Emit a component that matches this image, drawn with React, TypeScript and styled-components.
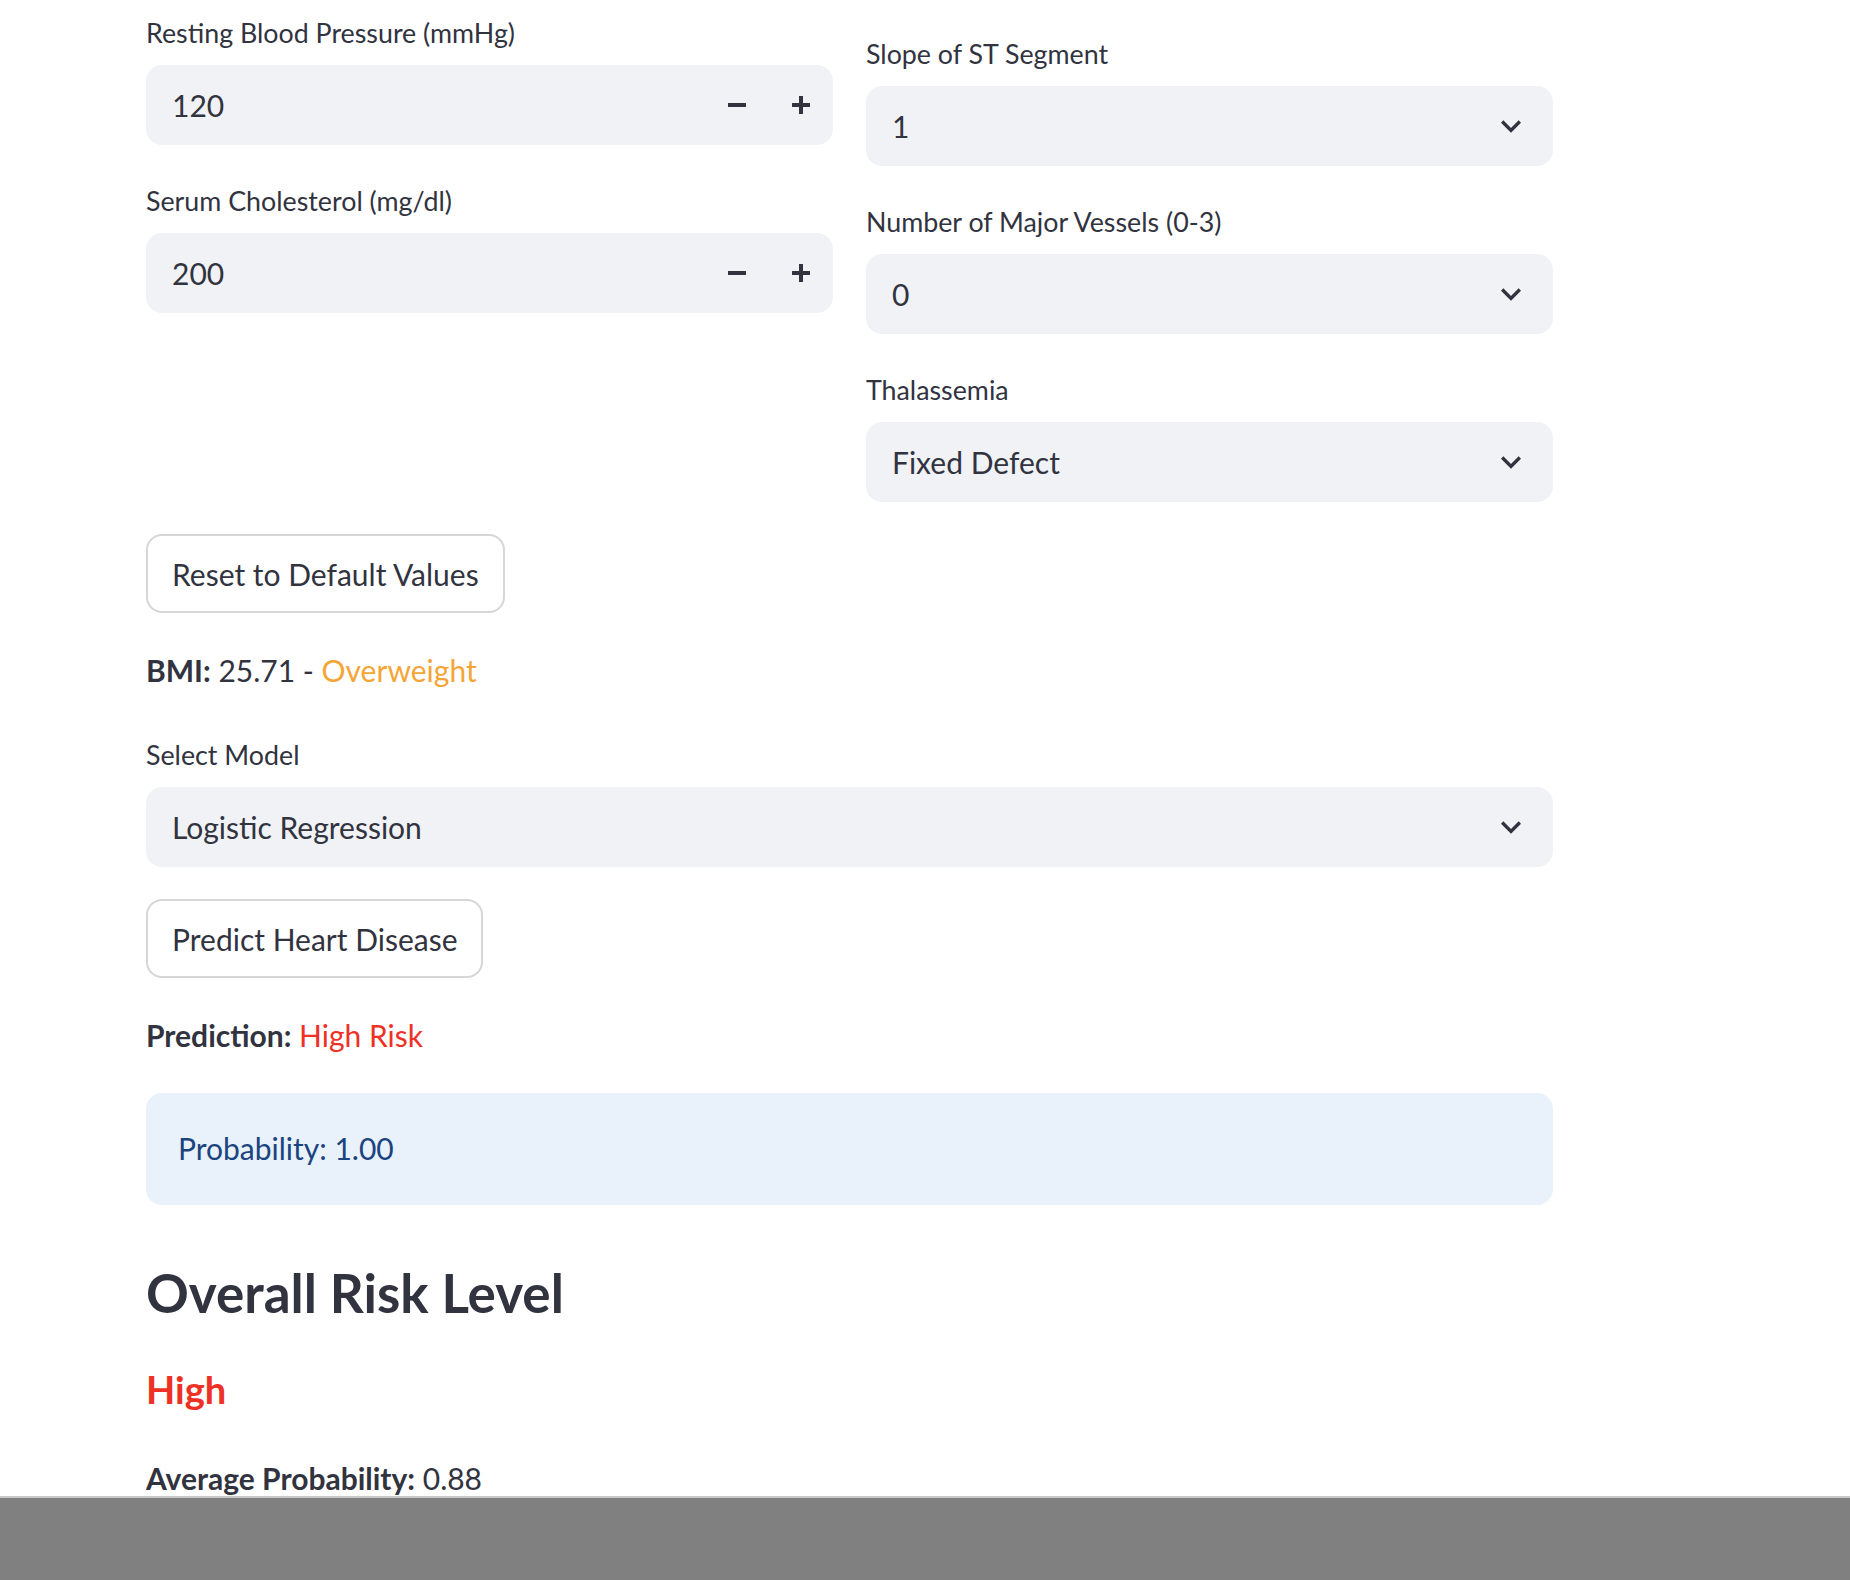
import React from "react";
import styled, { createGlobalStyle } from "styled-components";

const GlobalStyle = createGlobalStyle`
  html, body {
    margin: 0;
    padding: 0;
    background: #ffffff;
  }
  body {
    font-family: "Source Sans Pro", "Lato", "Liberation Sans", sans-serif;
    color: #31333f;
    -webkit-font-smoothing: antialiased;
  }
  * { box-sizing: border-box; }
`;

const Main = styled.main`
  width: 1407px;
  margin-left: 146px;
  padding-top: 9px;
  display: flex;
  flex-direction: column;
  gap: 32px;
`;

const Columns = styled.div`
  display: grid;
  grid-template-columns: 1fr 1fr;
  column-gap: 33px;
`;

const Column = styled.div<{ $offset?: number }>`
  display: flex;
  flex-direction: column;
  gap: 32px;
  padding-top: ${(p) => p.$offset ?? 0}px;
`;

const Field = styled.div`
  display: flex;
  flex-direction: column;
`;

const Label = styled.label`
  display: flex;
  align-items: center;
  height: 48px;
  margin-bottom: 8px;
  font-size: 26.8px;
  line-height: 44px;
  color: #31333f;
`;

const InputBox = styled.div`
  display: flex;
  align-items: center;
  height: 80px;
  background: #f0f2f6;
  border-radius: 16px;
  padding-left: 26px;
`;

const Value = styled.span`
  flex: 1;
  font-size: 30px;
  line-height: 44px;
  color: #31333f;
`;

const StepButton = styled.button`
  width: 64px;
  height: 80px;
  border: none;
  background: transparent;
  padding: 0;
  display: flex;
  align-items: center;
  justify-content: center;
  color: #31333f;
  cursor: pointer;
`;

const SelectBox = styled(InputBox)`
  padding-right: 22px;
`;

const Chevron = styled.svg`
  width: 40px;
  height: 40px;
  flex: none;
`;

const Button = styled.button`
  align-self: flex-start;
  height: 79px;
  padding: 0 24px;
  background: #ffffff;
  border: 2px solid rgba(49, 51, 63, 0.2);
  border-radius: 16px;
  font-family: inherit;
  font-size: 30px;
  color: #31333f;
  cursor: pointer;
`;

const Paragraph = styled.p<{ $mb?: number }>`
  margin: 0 0 ${(p) => p.$mb ?? 0}px;
  font-size: 30px;
  line-height: 51px;
  color: #31333f;
`;

const Strong = styled.strong`
  font-weight: 700;
`;

const Tone = styled.span<{ $tone: "orange" | "red" }>`
  color: ${(p) => (p.$tone === "orange" ? "#f5a536" : "#ee3124")};
`;

const InfoBox = styled.div`
  background: #e9f1fb;
  border-radius: 16px;
  padding: 30px 32px 31px;
  font-size: 30px;
  line-height: 51px;
  color: #1a4480;
`;

const Heading = styled.h3`
  margin: 0;
  padding: 22px 0 0;
  font-size: 53px;
  line-height: 67px;
  font-weight: 700;
  color: #31333f;
`;

const RiskLevel = styled.h5`
  margin: 0;
  padding: 7px 0 8px;
  font-size: 38px;
  line-height: 48px;
  font-weight: 700;
  color: #ee3124;
`;

const BottomBar = styled.div`
  position: fixed;
  left: 0;
  right: 0;
  bottom: 0;
  height: 84px;
  background: #808080;
  border-top: 2px solid #c8c8c8;
`;

const MinusIcon = () => (
  <svg width="20" height="20" viewBox="0 0 20 20">
    <rect x="1" y="8" width="18" height="4" fill="currentColor" />
  </svg>
);

const PlusIcon = () => (
  <svg width="20" height="20" viewBox="0 0 20 20">
    <rect x="1" y="8" width="18" height="4" fill="currentColor" />
    <rect x="8" y="1" width="4" height="18" fill="currentColor" />
  </svg>
);

const ChevronDown = () => (
  <Chevron viewBox="0 0 24 24">
    <path d="M16.59 8.59L12 13.17 7.41 8.59 6 10l6 6 6-6z" fill="#31333f" />
  </Chevron>
);

const NumberInput = ({ label, value }: { label: string; value: string }) => (
  <Field>
    <Label>{label}</Label>
    <InputBox>
      <Value>{value}</Value>
      <StepButton aria-label="decrement">
        <MinusIcon />
      </StepButton>
      <StepButton aria-label="increment">
        <PlusIcon />
      </StepButton>
    </InputBox>
  </Field>
);

const Select = ({ label, value }: { label: string; value: string }) => (
  <Field>
    <Label>{label}</Label>
    <SelectBox>
      <Value>{value}</Value>
      <ChevronDown />
    </SelectBox>
  </Field>
);

export default function App() {
  return (
    <>
      <GlobalStyle />
      <Main>
        <Columns>
          <Column>
            <NumberInput label="Resting Blood Pressure (mmHg)" value="120" />
            <NumberInput label="Serum Cholesterol (mg/dl)" value="200" />
          </Column>
          <Column $offset={21}>
            <Select label="Slope of ST Segment" value="1" />
            <Select label="Number of Major Vessels (0-3)" value="0" />
            <Select label="Thalassemia" value="Fixed Defect" />
          </Column>
        </Columns>
        <Button>Reset to Default Values</Button>
        <Paragraph $mb={3}>
          <Strong>BMI:</Strong> 25.71 - <Tone $tone="orange">Overweight</Tone>
        </Paragraph>
        <Select label="Select Model" value="Logistic Regression" />
        <Button>Predict Heart Disease</Button>
        <Paragraph>
          <Strong>Prediction:</Strong> <Tone $tone="red">High Risk</Tone>
        </Paragraph>
        <InfoBox>Probability: 1.00</InfoBox>
        <Heading>Overall Risk Level</Heading>
        <RiskLevel>High</RiskLevel>
        <Paragraph>
          <Strong>Average Probability:</Strong> 0.88
        </Paragraph>
      </Main>
      <BottomBar />
    </>
  );
}
